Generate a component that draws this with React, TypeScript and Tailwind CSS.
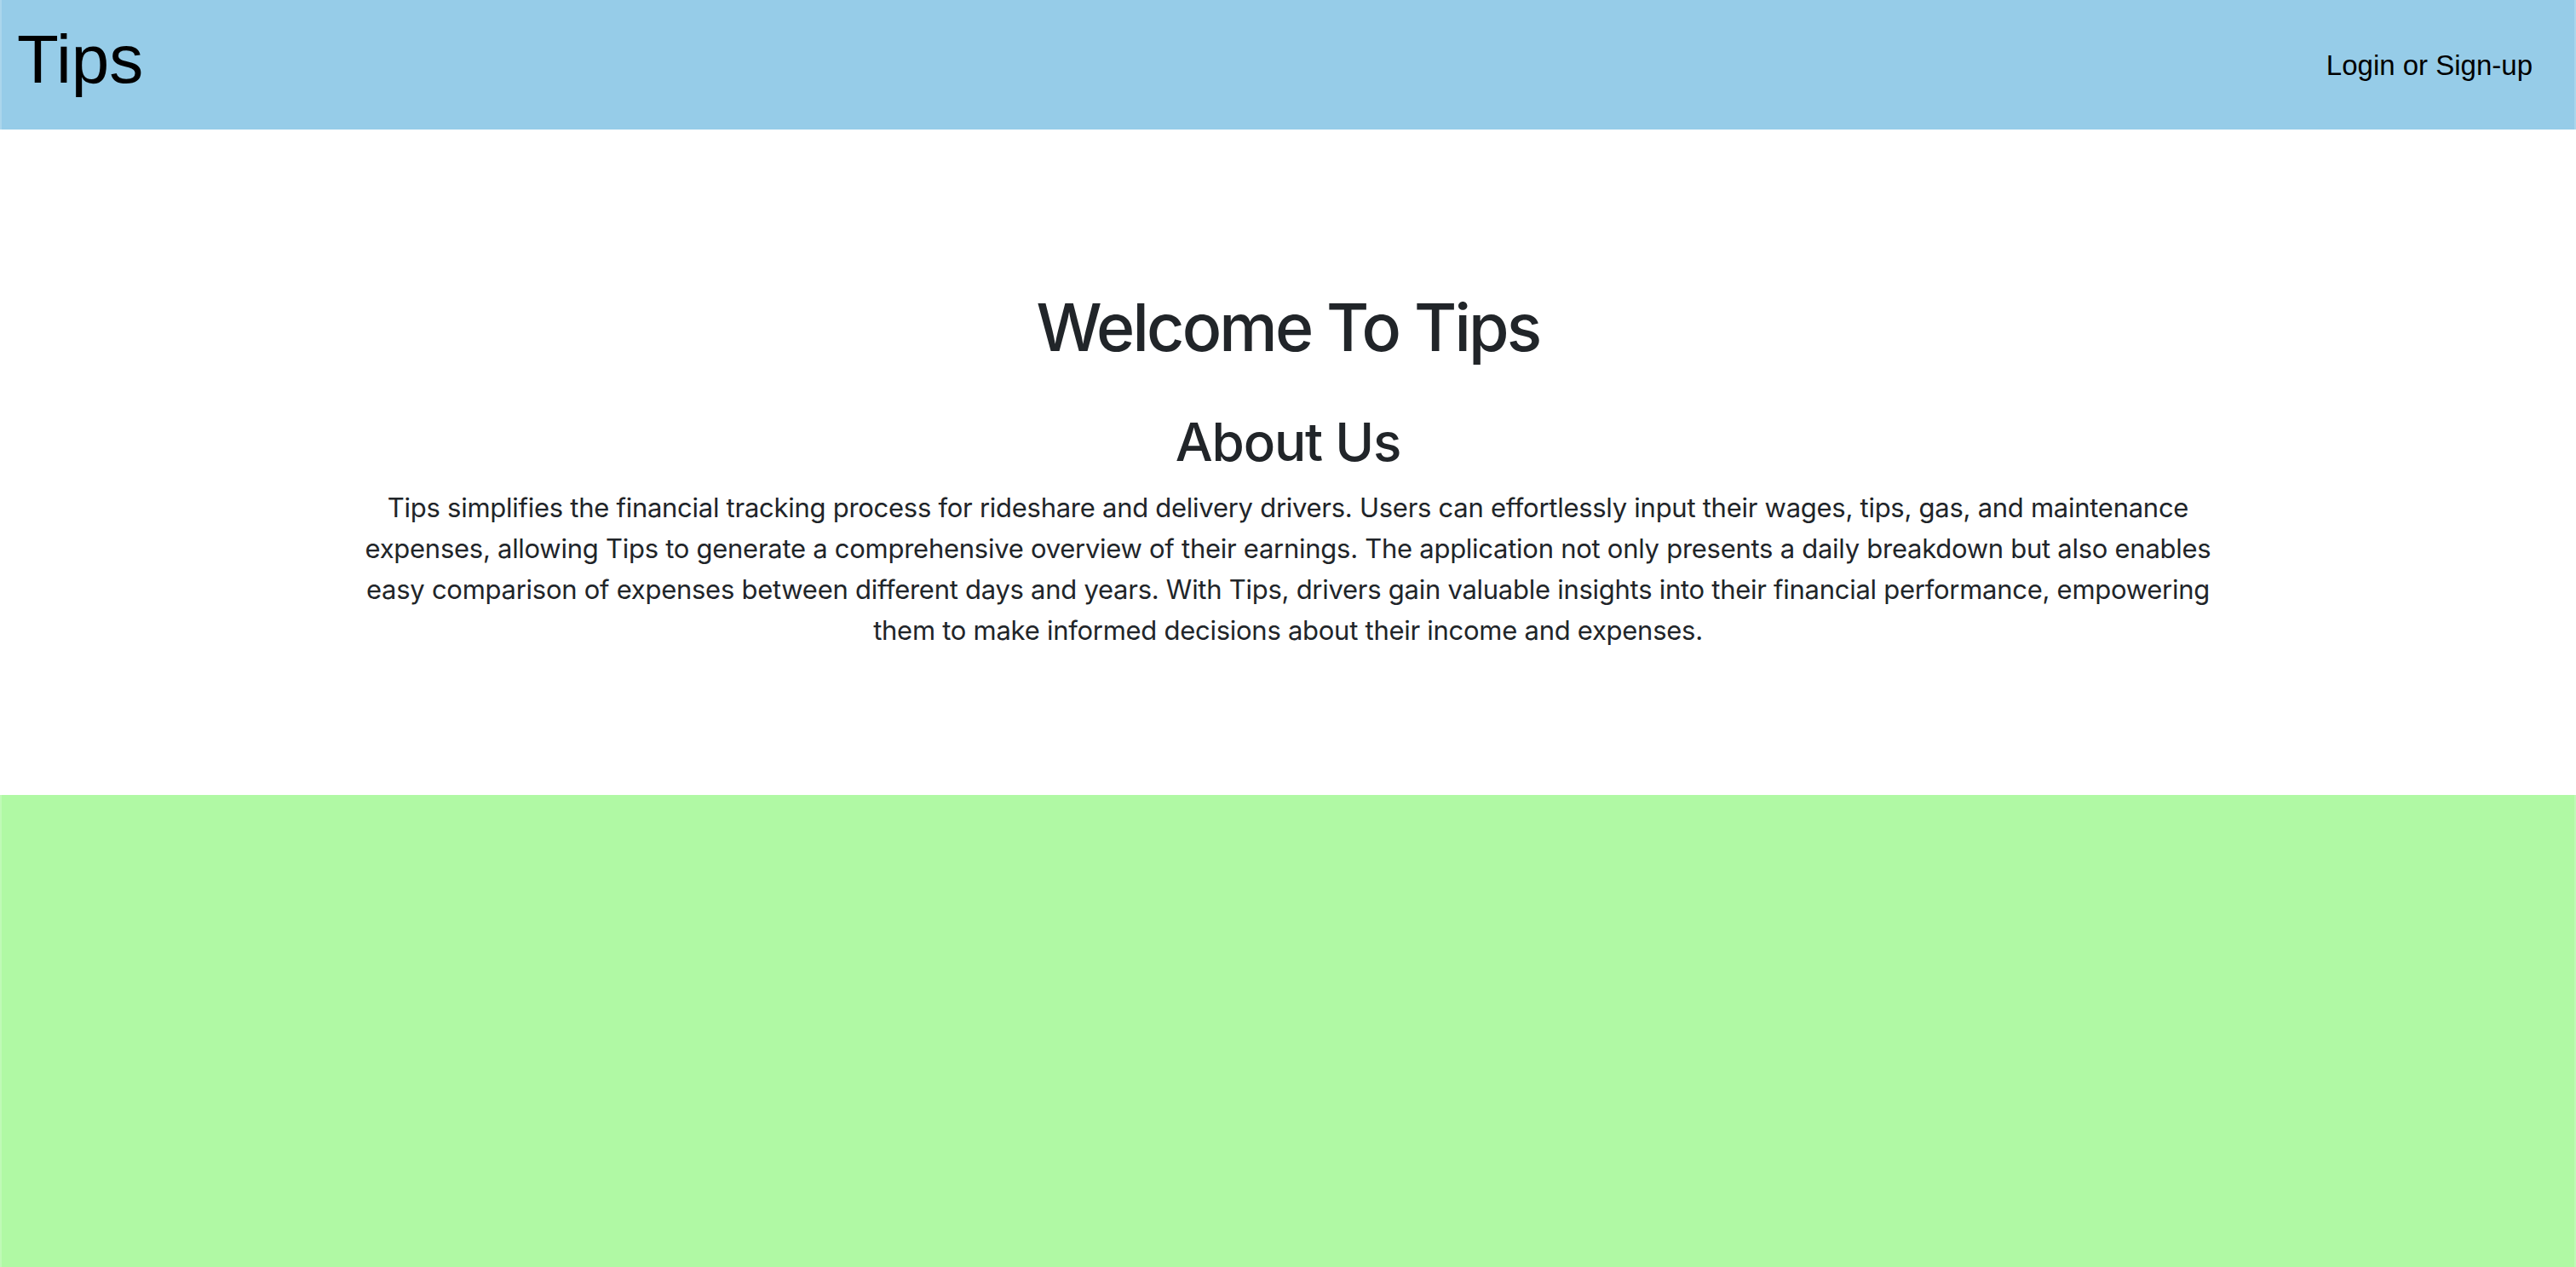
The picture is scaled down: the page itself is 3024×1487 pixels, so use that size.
const aboutLines = [
  "Tips simplifies the financial tracking process for rideshare and delivery drivers. Users can effortlessly input their wages, tips, gas, and maintenance",
  "expenses, allowing Tips to generate a comprehensive overview of their earnings. The application not only presents a daily breakdown but also enables",
  "easy comparison of expenses between different days and years. With Tips, drivers gain valuable insights into their financial performance, empowering",
  "them to make informed decisions about their income and expenses.",
];

export default function App() {
  return (
    <div className="min-h-screen bg-white">
      <header className="flex h-[152px] items-start justify-between border-x-2 border-[#ffffff33] bg-[#96cce8] pl-[18px] pr-[49px] font-['Liberation_Sans',Arial,sans-serif] text-black">
        <a className="mt-[22px] text-[80px] leading-[96px]">Tips</a>
        <a className="mt-[53px] text-[33px] leading-[48px]">Login or Sign-up</a>
      </header>

      <main className="flex h-[781px] flex-col items-center font-['Inter',sans-serif] text-[#212529]">
        <h1 className="mt-[184px] text-[77px] font-medium leading-[96px] tracking-[-2.8px]">Welcome To Tips</h1>
        <h2 className="mt-[48px] text-[62px] font-medium leading-[77px] tracking-[-1.2px]">About Us</h2>
        <p className="mt-[15px] w-full text-center text-[31px] leading-[48px] tracking-[-0.27px]">
          {aboutLines.map((line) => (
            <span key={line} className="block whitespace-nowrap">
              {line}
            </span>
          ))}
        </p>
      </main>

      <section className="h-[554px] border-x-2 border-[#ffffff33] bg-[#b0f9a4]" />
    </div>
  );
}
